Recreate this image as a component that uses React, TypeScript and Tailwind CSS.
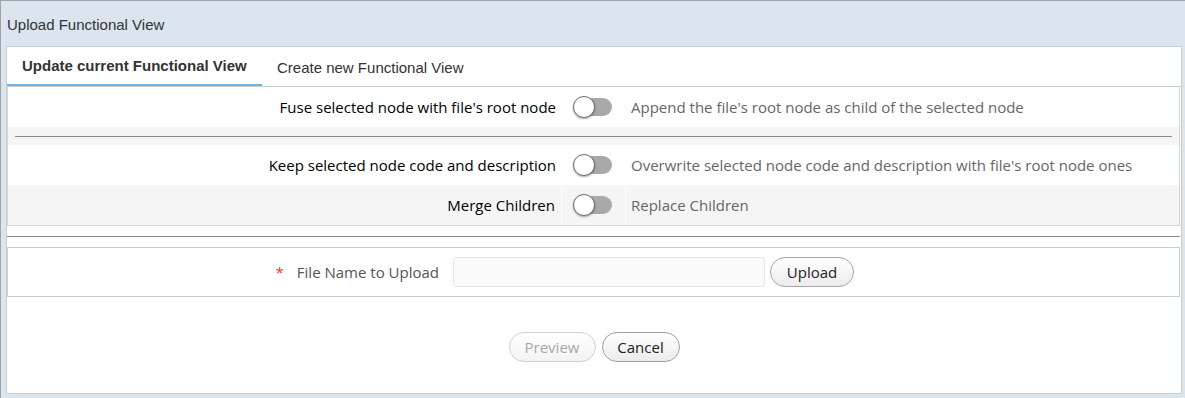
import React from "react";

const OS = "font-['Open_Sans',sans-serif]";
const AR = "font-['Liberation_Sans',Arial,sans-serif]";

function Toggle() {
  return (
    <div className="relative w-[39px] h-[22px]">
      <div className="absolute left-[7px] top-[2px] w-[32px] h-[18px] rounded-full bg-[#a9a9a9]" />
      <div className="absolute left-0 top-0 w-[22px] h-[22px] rounded-full bg-white border border-[#6f6f6f] shadow-[0_1px_2px_rgba(0,0,0,0.35)]" />
    </div>
  );
}

function Row({
  label,
  desc,
  gray,
  h = "h-[40px]",
}: {
  label: string;
  desc: string;
  gray?: boolean;
  h?: string;
}) {
  return (
    <div className={`flex ${h} ${gray ? "bg-[#f5f5f5]" : "bg-white"} ${OS} text-[15px]`}>
      <div className={`w-[554px] flex items-center justify-end pr-[6px] text-black ${gray ? "border-r border-white" : ""}`}>
        {label}
      </div>
      <div className={`w-[64px] flex items-center pl-[11px] ${gray ? "border-r border-white" : ""}`}>
        <Toggle />
      </div>
      <div className="flex-1 flex items-center pl-[5px] text-[#666]">{desc}</div>
    </div>
  );
}

export default function App() {
  return (
    <div className="w-[1185px] h-[398px] bg-[#dae5ef] border-t border-l border-[#a3a3a3] pl-[5px] overflow-hidden">
      <div className={`h-[45px] flex items-center pl-px pt-[3px] text-[15px] text-[#333] ${AR}`}>
        Upload Functional View
      </div>
      <div className="w-[1176px] h-[348px] bg-white border border-[#cccccc] flex flex-col">
        {/* tabs */}
        <div className={`flex h-[40px] border-b border-[#cccccc] text-[15px] ${AR}`}>
          <div className="w-[255px] h-[39px] flex items-center pl-[15px] pt-[1px] font-bold text-[#333] border-b-2 border-[#6db4de]">
            Update current Functional View
          </div>
          <div className="h-[39px] flex items-center pl-[15px] pt-[4px] text-[#333]">
            Create new Functional View
          </div>
        </div>

        {/* options table */}
        <div className="w-[1173px] border-l border-r border-b border-[#d6d6d6]">
          <Row label="Fuse selected node with file's root node" desc="Append the file's root node as child of the selected node" />
          <div className="h-[18px] bg-[#f5f5f5] flex items-center px-[7px]">
            <div className="w-full h-px bg-[#8a8a8a]" />
          </div>
          <Row
            label="Keep selected node code and description"
            desc="Overwrite selected node code and description with file's root node ones"
          />
          <Row label="Merge Children" desc="Replace Children" gray h="h-[40px]" />
        </div>

        <div className="w-[1173px] h-px bg-[#8a8a8a] mt-[10px]" />

        {/* file box */}
        <div className={`w-[1173px] h-[50px] mt-[10px] border border-[#cccccc] flex items-center ${OS}`}>
          <div className="w-[445px] flex items-center justify-end pr-[14px] text-[15px]">
            <span className="text-[#e53935] mr-[13px] text-[15px]">*</span>
            <span className="text-[#555]">File Name to Upload</span>
          </div>
          <div className="w-[312px] h-[30px] bg-[#fafafa] border border-[#e6e6e6] rounded-[3px]" />
          <button className="ml-[5px] w-[84px] h-[30px] rounded-full border border-[#a8a8a8] bg-gradient-to-b from-white to-[#ececec] text-[15px] text-[#222] flex items-center justify-center">
            Upload
          </button>
        </div>

        {/* actions */}
        <div className={`flex justify-center gap-[6px] mt-[35px] ${OS} text-[15px]`}>
          <button className="w-[87px] h-[30px] rounded-full border border-[#d0d0d0] bg-gradient-to-b from-white to-[#f3f3f3] text-[#a8a8a8] flex items-center justify-center">
            Preview
          </button>
          <button className="w-[78px] h-[30px] rounded-full border border-[#a0a0a0] bg-gradient-to-b from-white to-[#ececec] text-[#222] flex items-center justify-center">
            Cancel
          </button>
        </div>
      </div>
    </div>
  );
}
